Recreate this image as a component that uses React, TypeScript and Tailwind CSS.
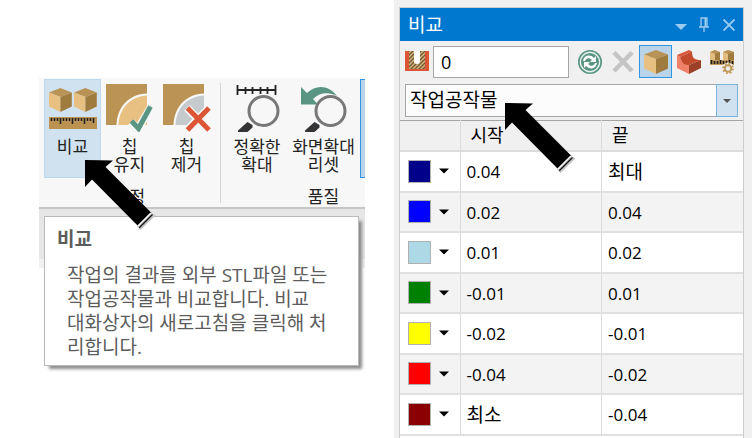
import type { ReactNode } from "react";

const levels = [
  { color: "bg-[#00008b]", name: "남색", start: "0.04", end: "최대" },
  { color: "bg-[#0000ff]", name: "파랑", start: "0.02", end: "0.04" },
  { color: "bg-[#add8e6]", name: "하늘색", start: "0.01", end: "0.02" },
  { color: "bg-[#008000]", name: "초록", start: "-0.01", end: "0.01" },
  { color: "bg-[#ffff00]", name: "노랑", start: "-0.02", end: "-0.01" },
  { color: "bg-[#ff0000]", name: "빨강", start: "-0.04", end: "-0.02" },
  { color: "bg-[#8b0000]", name: "진빨강", start: "최소", end: "-0.04" },
];

const Cube = () => (
  <>
    <path d="M12 0 L24 4.5 L12 9 L0 4.5 Z" fill="#b99355" />
    <path d="M0 4.5 L12 9 V24 L0 18.5 Z" fill="#e8c182" />
    <path d="M12 9 L24 4.5 V18.5 L12 24 Z" fill="#a07b3e" />
  </>
);

const CompareIcon = () => (
  <svg width="48" height="48" viewBox="0 0 48 48">
    <g transform="translate(0 4) scale(.95 1)">
      <Cube />
    </g>
    <g transform="translate(25 4) scale(.95 1)">
      <Cube />
    </g>
    <rect y="33" width="48" height="12" fill="#bb9252" />
    <path
      d="M2.5 34v3M5.5 34v3M8.5 34v3M11.5 34v6M14.5 34v3M17.5 34v3M20.5 34v3M23.5 34v6M26.5 34v3M29.5 34v3M32.5 34v3M35.5 34v6M38.5 34v3M41.5 34v3M44.5 34v5"
      stroke="#222"
      strokeWidth="1.6"
    />
  </svg>
);

const ChipIcon = ({ fill, children }: { fill: string; children: ReactNode }) => (
  <svg width="48" height="48" viewBox="0 0 48 48">
    <path d="M0 0H41V41H0Z" fill="#bb9455" />
    <path d="M41 9.500C23 10 11 23 10.500 41H41Z" fill="#f7f7f7" />
    <path d="M41 11.500C25 12 13 24 12.500 41H41Z" fill={fill} />
    {children}
  </svg>
);

const Magnifier = () => (
  <>
    <circle cx="30.500" cy="27" r="14.500" fill="#f7f7f7" stroke="#777" strokeWidth="3" />
    <path d="M14.500 38 L19.500 41 V43.500 L14.500 48 H5 V46.500 Z" fill="#333436" />
  </>
);

const ExactZoomIcon = () => (
  <svg width="48" height="48" viewBox="0 0 48 48">
    <Magnifier />
    <path
      d="M4 6H43M4.500 1V11M12.500 3V10M19.500 3V10M27.500 3V10M34.500 3V10M42.500 1V11"
      stroke="#222"
      strokeWidth="1.800"
      fill="none"
    />
  </svg>
);

const ResetZoomIcon = () => (
  <svg width="48" height="48" viewBox="0 0 48 48">
    <path
      d="M1 3 L7 9 C16 0 29 1 37 12 C29 8 20 8 13 15 L18 20.500 H1 Z"
      fill="#5a9583"
    />
    <Magnifier />
  </svg>
);

const PocketIcon = () => (
  <svg width="24" height="21" viewBox="0 0 24 21" className="shrink-0" aria-hidden="true">
    <defs>
      <pattern id="hatch" width="4" height="4" patternUnits="userSpaceOnUse">
        <rect width="4" height="4" fill="#d9b678" />
        <path d="M-1 5 L5 -1 M-1 1 L1 -1 M3 5 L5 3" stroke="#6a5838" strokeWidth="1.300" />
      </pattern>
    </defs>
    <rect width="24" height="20" fill="#dc5535" />
    <rect x="4" width="16" height="18" fill="url(#hatch)" />
    <path d="M9 0H15V10Q15 13 12 13Q9 13 9 10Z" fill="#fff" />
  </svg>
);

const RefreshIcon = () => (
  <svg width="24" height="24" viewBox="0 0 24 24">
    <circle cx="12" cy="12" r="11.200" fill="#e9f2ef" stroke="#5a9583" strokeWidth="1.600" />
    <circle cx="12" cy="12" r="9" fill="#5a9583" />
    <path
      d="M5 11 C6 5 12 4 16 8 L18 6 V12 H12 L14 10 C11 7 8 8 7 11 Z M19 13 C18 19 12 20 8 16 L6 18 V12 H12 L10 14 C13 17 16 16 17 13 Z"
      fill="#fff"
    />
  </svg>
);

const CancelIcon = () => (
  <svg width="24" height="24" viewBox="0 0 24 24">
    <path d="M3 2.500 L21 21 M21 2.500 L3 21" stroke="#c5c5c5" strokeWidth="4.500" />
  </svg>
);

const StockIcon = () => (
  <svg width="24" height="24" viewBox="0 0 24 24">
    <Cube />
  </svg>
);

const PartIcon = () => (
  <svg width="24" height="24" viewBox="0 0 24 24">
    <path d="M0 5 L3 7 C5 13 6 14 12 15 V24 L0 18 Z" fill="#f08068" />
    <path d="M0 5 L12 0 L15 1.500 L3 7 Z" fill="#d9583c" />
    <path d="M3 7 L15 1.500 C15 8 17 10 24 10 L12 15 C6 15 5 13 3 7 Z" fill="#c44a2c" />
    <path d="M12 15 L24 10 V18 L12 24 Z" fill="#9c3f27" />
  </svg>
);

const CompareOptionsIcon = () => (
  <svg width="24" height="24" viewBox="0 0 24 24">
    <path d="M0 2 L5 0 L10 2 V10 H0 Z M13 2 L18 0 L24 2 V10 H13 Z" fill="#e3bd7f" />
    <path d="M5 3 L10 2 V10 H5 Z M18 3 L24 2 V10 H18 Z" fill="#a07b3e" />
    <path d="M0 2 L5 0 L10 2 L5 4 Z M13 2 L18 0 L24 2 L18 4 Z" fill="#b99355" />
    <rect y="10" width="24" height="5" fill="#c49b5c" />
    <path
      d="M1.500 10v4M4.500 11v3M7.500 11v3M10.500 10v4M13.500 11v3M16.500 11v3M19.500 10v4M22.500 11v3"
      stroke="#1c1c1c"
      strokeWidth="1.700"
    />
    <circle cx="18" cy="18.500" r="6" fill="#f0f0f0" />
    <circle cx="18" cy="18.500" r="3.300" fill="none" stroke="#c19a5c" strokeWidth="2" />
    <circle
      cx="18"
      cy="18.500"
      r="4.900"
      fill="none"
      stroke="#c19a5c"
      strokeWidth="1.800"
      strokeDasharray="1.920 1.920"
    />
  </svg>
);

const Caret = ({ className }: { className: string }) => (
  <svg width="12" height="6" viewBox="0 0 12 6" className={className} aria-hidden="true">
    <path d="M0 0 H12 L6 6 Z" fill="currentColor" />
  </svg>
);

const Pointer = ({ className }: { className: string }) => (
  <svg
    width="72"
    height="72"
    viewBox="0 0 72 72"
    className={`pointer-events-none absolute ${className}`}
    aria-hidden="true"
  >
    <path d="M0 0 L28 .5 L20.500 7 L66.500 53 L53 66 L7 19.500 L0 27 Z" fill="#000" />
    <path d="M65.500 52.500 L70.500 55.500 L55.500 70 L52 66 Z" fill="#c4c4c4" />
    <path d="M65.800 53.200 L52.800 66.200" stroke="#fff" strokeWidth="1.200" />
    <path d="M67.500 54.500 L54.200 67.800" stroke="#111" strokeWidth="1.300" />
  </svg>
);

const RibbonButton = ({
  icon,
  lines,
  className,
}: {
  icon: ReactNode;
  lines: string[];
  className: string;
}) => (
  <button
    type="button"
    className={`flex h-[99px] shrink-0 flex-col items-center border pt-1 text-[17px] leading-[18px] whitespace-nowrap ${className}`}
  >
    {icon}
    <span className="mt-[6px]">
      {lines.map((line) => (
        <span key={line} className="block">
          {line}
        </span>
      ))}
    </span>
  </button>
);

const Ribbon = () => (
  <div className="flex overflow-hidden border-b-2 border-[#c6c6c6] bg-[#f7f7f7] pt-px text-[#222]">
    <div className="shrink-0 px-[5px] pb-px">
      <div className="flex">
        <RibbonButton
          icon={<CompareIcon />}
          lines={["비교"]}
          className="w-[57px] border-[#bcd9f0] bg-[#d0e2f0]"
        />
        <RibbonButton
          icon={
            <ChipIcon fill="#e8c182">
              <path d="M25 38 L32 45 L45 23" fill="none" stroke="#f7f7f7" strokeWidth="8" />
              <path d="M25.500 37 L32.500 44.500 L44.500 22.500" fill="none" stroke="#5a9583" strokeWidth="5" />
            </ChipIcon>
          }
          lines={["칩", "유지"]}
          className="w-[57px] border-transparent"
        />
        <RibbonButton
          icon={
            <ChipIcon fill="#c5cacd">
              <path d="M24 24 L46 46 M46 24 L24 46" stroke="#f7f7f7" strokeWidth="8" />
              <path d="M24.500 24 L46 46 M46 24 L24.500 46" stroke="#dc5535" strokeWidth="5" />
            </ChipIcon>
          }
          lines={["칩", "제거"]}
          className="w-[57px] border-transparent"
        />
      </div>
      <p className="mt-[10px] text-center text-[17px] leading-[18px]">측정</p>
    </div>
    <div className="my-1 w-px shrink-0 bg-[#d4d4d4]" />
    <div className="shrink-0 pb-px pl-[6px]">
      <div className="flex">
        <RibbonButton
          icon={<ExactZoomIcon />}
          lines={["정확한", "확대"]}
          className="w-[60px] border-transparent"
        />
        <RibbonButton
          icon={<ResetZoomIcon />}
          lines={["화면확대", "리셋"]}
          className="w-[73px] border-transparent"
        />
        <RibbonButton icon={null} lines={[]} className="w-[60px] border-[#3296e6] bg-[#b8d3ea]" />
      </div>
      <p className="mt-[10px] text-center text-[17px] leading-[18px]">품질</p>
    </div>
  </div>
);

const Tooltip = () => (
  <div
    role="tooltip"
    className="absolute top-[7px] right-[6px] left-[5px] border border-[#bababa] bg-white px-3 pt-[10px] pb-[6px] text-[19px] leading-6 whitespace-nowrap text-[#5c5c5c] shadow-[4px_4px_3px_-1px_#8c8c8c]"
  >
    <h2 className="font-bold">비교</h2>
    <p className="mt-3 pl-[10px]">
      작업의 결과를 외부 STL파일 또는
      <br />
      작업공작물과 비교합니다. 비교
      <br />
      대화상자의 새로고침을 클릭해 처
      <br />
      리합니다.
    </p>
  </div>
);

const ToolButton = ({
  label,
  active = false,
  children,
}: {
  label: string;
  active?: boolean;
  children: ReactNode;
}) => (
  <button
    type="button"
    aria-label={label}
    className={`flex size-[33px] shrink-0 items-center justify-center border ${
      active ? "border-[#2f96e4] bg-[#b9d3e8]" : "border-transparent"
    }`}
  >
    {children}
  </button>
);

const Value = ({ text }: { text: string }) => (
  <span className={/\d/.test(text) ? "text-[17px]" : "text-[19px]"}>{text}</span>
);

const ComparePanel = () => (
  <section className="border-x border-t border-[#cdcdcd] bg-[#f0f0f0] text-black">
    <header className="flex h-[33px] items-center bg-[#0078d0] px-2 text-[#9bcbee]">
      <h1 className="flex-1 text-[19px] leading-6 text-white">비교</h1>
      <button type="button" aria-label="메뉴" className="mt-1 mr-3">
        <Caret className="block" />
      </button>
      <button type="button" aria-label="고정" className="mr-[14px]">
        <svg width="10" height="15" viewBox="0 0 10 15" className="block">
          <path d="M2 10V1H8V10M0 10H10M5 10V15" fill="none" stroke="currentColor" strokeWidth="1.300" />
          <path d="M6.500 1V10" stroke="currentColor" strokeWidth="2" />
        </svg>
      </button>
      <button type="button" aria-label="닫기">
        <svg width="12" height="12" viewBox="0 0 12 12" className="block">
          <path d="M.5 .5 L11.500 11.500 M11.500 .5 L.5 11.500" stroke="currentColor" strokeWidth="1.900" />
        </svg>
      </button>
    </header>

    <div className="flex items-center gap-1 px-[5px] pt-1">
      <PocketIcon />
      <input
        type="text"
        aria-label="여유량"
        defaultValue="0"
        className="h-8 min-w-0 flex-1 border border-[#a6a6a6] bg-white px-[7px] text-[18px] outline-none"
      />
      <div className="flex">
        <ToolButton label="새로고침">
          <RefreshIcon />
        </ToolButton>
        <ToolButton label="취소">
          <CancelIcon />
        </ToolButton>
        <ToolButton label="공작물" active>
          <StockIcon />
        </ToolButton>
        <ToolButton label="파트">
          <PartIcon />
        </ToolButton>
        <ToolButton label="비교 설정">
          <CompareOptionsIcon />
        </ToolButton>
      </div>
    </div>

    <div className="px-[5px] pt-[6px] pb-[3px]">
      <div className="relative">
        <select
          aria-label="비교 대상"
          className="block h-[33px] w-full appearance-none border border-[#a6a6a6] bg-[#fcfcfc] px-1 text-[19px] outline-none"
        >
          <option>작업공작물</option>
        </select>
        <span className="pointer-events-none absolute inset-y-0 right-0 flex w-[22px] items-center justify-center border border-[#7ab2de] bg-[#d0e2f0]">
          <svg width="8" height="4" viewBox="0 0 8 4" aria-hidden="true">
            <path d="M0 0H8L4 4Z" fill="#555" />
          </svg>
        </span>
      </div>
    </div>

    <table className="w-full table-fixed border-collapse border-t border-[#a6a6a6] text-left leading-6">
      <colgroup>
        <col className="w-[60px]" />
        <col />
        <col />
      </colgroup>
      <thead>
        <tr className="h-[30px] border-b-2 border-[#dcdcdc] text-[18px]">
          <th aria-label="색상" className="border-r border-[#dcdcdc] p-0" />
          <th className="border-r border-[#dcdcdc] py-0 pl-[10px] font-normal">시작</th>
          <th className="py-0 pl-[10px] font-normal">끝</th>
        </tr>
      </thead>
      <tbody>
        {levels.map((level) => (
          <tr
            key={level.name}
            className="border-b-2 border-[#e0e0e0] odd:h-[41px] odd:bg-white even:h-10 even:bg-[#f3f3f3]"
          >
            <td className="border-r border-[#dcdcdc] p-0">
              <button type="button" aria-label={level.name} className="ml-2 flex items-center gap-2">
                <span className={`size-[23px] border border-[#b0b0b0] ${level.color}`} />
                <Caret className="h-[6px] w-[10px]" />
              </button>
            </td>
            <td className="border-r border-[#dcdcdc] pt-[2px] pb-0 pl-[6px]">
              <Value text={level.start} />
            </td>
            <td className="pt-[2px] pb-0 pl-[6px]">
              <Value text={level.end} />
            </td>
          </tr>
        ))}
      </tbody>
    </table>
    <div className="h-2 bg-white" />
  </section>
);

const App = () => {
  return (
    <main className="grid h-screen grid-cols-[minmax(0,394fr)_minmax(0,358fr)] overflow-hidden bg-white font-['Open_Sans','Noto_Sans_CJK_KR',sans-serif]">
      <div className="pt-[78px] pr-[29px] pl-[39px]">
        <div className="relative">
          <Ribbon />
          <div className="relative h-[59px] border-b-[9px] border-[#f1f1f1] bg-[#e6e6e6]">
            <Tooltip />
          </div>
          <Pointer className="top-[82px] left-[46px]" />
        </div>
      </div>
      <div className="relative bg-[#f0f0f0] pt-[7px] pr-2 pl-[5px]">
        <ComparePanel />
        <Pointer className="top-[103px] left-[111px]" />
      </div>
    </main>
  );
};

export default App;
